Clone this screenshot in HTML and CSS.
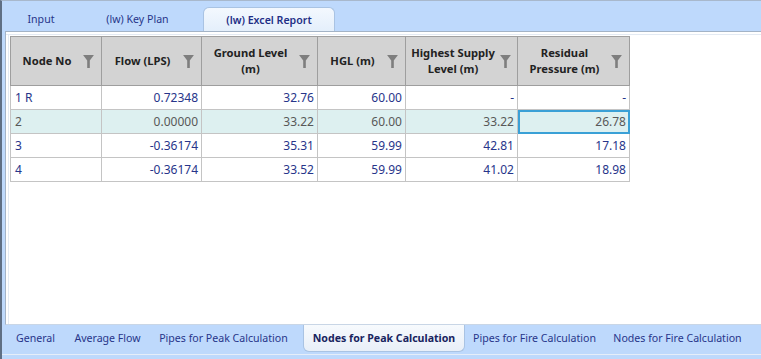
FILE: index.html
```html
<!DOCTYPE html>
<html lang="en">
<head>
    <meta charset="UTF-8">
    <meta name="viewport" content="width=device-width, initial-scale=1.0">
    <title>Excel Report</title>
    <link rel="stylesheet" href="styles.css">
</head>
<body>
    <div class="window">
        <!-- Top tabs -->
        <div class="top-tabs">
            <div class="tab input">Input</div>
            <div class="tab plan">(lw) Key Plan</div>
            <div class="tab active">(lw) Excel Report</div>
        </div>

        <!-- Report panel -->
        <div class="panel">
            <table class="grid">
                <colgroup>
                    <col style="width:91px">
                    <col style="width:100px">
                    <col style="width:116px">
                    <col style="width:88px">
                    <col style="width:112px">
                    <col style="width:112px">
                </colgroup>
                <thead>
                    <tr>
                        <th><div class="head"><span>Node No</span><svg class="filter" viewBox="0 0 10 12"><path d="M0 0H10L6.2 5V12H3.8V5Z"/></svg></div></th>
                        <th><div class="head"><span>Flow (LPS)</span><svg class="filter" viewBox="0 0 10 12"><path d="M0 0H10L6.2 5V12H3.8V5Z"/></svg></div></th>
                        <th><div class="head"><span>Ground Level<br>(m)</span><svg class="filter" viewBox="0 0 10 12"><path d="M0 0H10L6.2 5V12H3.8V5Z"/></svg></div></th>
                        <th><div class="head"><span>HGL (m)</span><svg class="filter" viewBox="0 0 10 12"><path d="M0 0H10L6.2 5V12H3.8V5Z"/></svg></div></th>
                        <th><div class="head tight"><span>Highest Supply<br>Level (m)</span><svg class="filter" viewBox="0 0 10 12"><path d="M0 0H10L6.2 5V12H3.8V5Z"/></svg></div></th>
                        <th><div class="head"><span>Residual<br>Pressure (m)</span><svg class="filter" viewBox="0 0 10 12"><path d="M0 0H10L6.2 5V12H3.8V5Z"/></svg></div></th>
                    </tr>
                </thead>
                <tbody>
                    <tr>
                        <td class="left">1 R</td>
                        <td>0.72348</td>
                        <td>32.76</td>
                        <td>60.00</td>
                        <td>-</td>
                        <td>-</td>
                    </tr>
                    <tr class="selected">
                        <td class="left">2</td>
                        <td>0.00000</td>
                        <td>33.22</td>
                        <td>60.00</td>
                        <td>33.22</td>
                        <td class="current">26.78</td>
                    </tr>
                    <tr>
                        <td class="left">3</td>
                        <td>-0.36174</td>
                        <td>35.31</td>
                        <td>59.99</td>
                        <td>42.81</td>
                        <td>17.18</td>
                    </tr>
                    <tr>
                        <td class="left">4</td>
                        <td>-0.36174</td>
                        <td>33.52</td>
                        <td>59.99</td>
                        <td>41.02</td>
                        <td>18.98</td>
                    </tr>
                </tbody>
            </table>
        </div>

        <!-- Bottom sheet tabs -->
        <div class="bottom-tabs">
            <div class="sheet w-general">General</div>
            <div class="sheet w-average">Average Flow</div>
            <div class="sheet w-pipes-peak">Pipes for Peak Calculation</div>
            <div class="sheet active">Nodes for Peak Calculation</div>
            <div class="sheet w-pipes-fire">Pipes for Fire Calculation</div>
            <div class="sheet w-nodes-fire">Nodes for Fire Calculation</div>
        </div>
    </div>
</body>
</html>
```

FILE: styles.css
```css
body {
    margin: 0;
    font-family: "Noto Sans", "Open Sans", sans-serif;
    font-size: 12px;
    background-color: #bed9fc;
    overflow: hidden;
}
.window {
    height: 359px;
    display: flex;
    flex-direction: column;
    border-top: 1px solid #a8b8cc;
    border-left: 2px solid #5f6f84;
    box-sizing: border-box;
}

/* top tabs */
.top-tabs {
    display: flex;
    align-items: flex-end;
    height: 30px;
    padding-left: 12px;
}
.tab {
    flex: none;
    color: #27358a;
    padding: 0 0 5px;
    text-align: center;
    font-size: 10.6px;
    white-space: nowrap;
}
.tab.input {
    width: 54px;
}
.tab.plan {
    width: 85px;
    margin-left: 27px;
}
.tab.active {
    width: 130px;
    margin-left: 23px;
    padding: 5px 0 4px;
    background: linear-gradient(#f3f8fe, #e4effb);
    border: 1px solid #a9c3e3;
    border-bottom: none;
    border-radius: 6px 6px 0 0;
    font-weight: 600;
    color: #1f2f86;
}

/* panel */
.panel {
    flex: 1;
    margin-left: 3px;
    background: #fff;
    border-top: 1px solid #a3b3c6;
    border-left: 1px solid #a3b3c6;
    border-bottom: 1px solid #c9d6e6;
    box-shadow: inset 0 2px 0 #fff, inset 0 3px 0 #e3eaf3, inset 2px 0 0 #fff, inset 3px 0 0 #e3eaf3;
    padding: 4px 0 0 4px;
}

/* grid */
.grid {
    border-collapse: collapse;
    table-layout: fixed;
    width: 619px;
    border: 1px solid #a0a0a0;
}
.grid th {
    background: #d3d3d3;
    height: 48px;
    padding: 0;
    border: 1px solid #9e9e9e;
    border-top: none;
    color: #222;
    font-weight: 700;
    font-size: 11.2px;
    line-height: 16px;
}
.head {
    display: flex;
    align-items: center;
    padding-right: 7px;
}
.head span {
    flex: 1;
    text-align: center;
}
.head.tight {
    padding-right: 6px;
}
.filter {
    width: 11px;
    height: 13px;
    fill: #7e7e7e;
    flex: none;
}
.grid td {
    height: 23px;
    padding: 0 3px 0 4px;
    border: 1px solid #c4c4c4;
    text-align: right;
    color: #27358a;
    font-size: 12px;
    white-space: nowrap;
}
.grid td.left {
    text-align: left;
}
.grid tr.selected td {
    background: #ddf0f0;
    color: #585858;
}
.grid td.current {
    outline: 2px solid #3aa0d6;
    outline-offset: -2px;
}

/* bottom tabs */
.bottom-tabs {
    display: flex;
    align-items: flex-start;
    height: 29px;
    padding-left: 5px;
    border-bottom: 1px solid #e6eef9;
    margin-bottom: 4px;
}
.sheet {
    flex: none;
    display: flex;
    justify-content: center;
    color: #27358a;
    padding-top: 6px;
    font-size: 10.6px;
    height: 21px;
    white-space: nowrap;
}
.w-general {
    width: 57px;
}
.w-average {
    width: 87px;
}
.w-pipes-peak {
    width: 145px;
    margin-right: 7px;
}
.sheet.active {
    width: 160px;
    background: linear-gradient(#f7fafd, #e8eff8);
    border: 1px solid #a9c3e3;
    border-top: none;
    border-radius: 0 0 6px 6px;
    font-weight: 700;
    color: #18245f;
    height: 20px;
}
.w-pipes-fire {
    width: 139px;
}
.w-nodes-fire {
    width: 147px;
}
```
